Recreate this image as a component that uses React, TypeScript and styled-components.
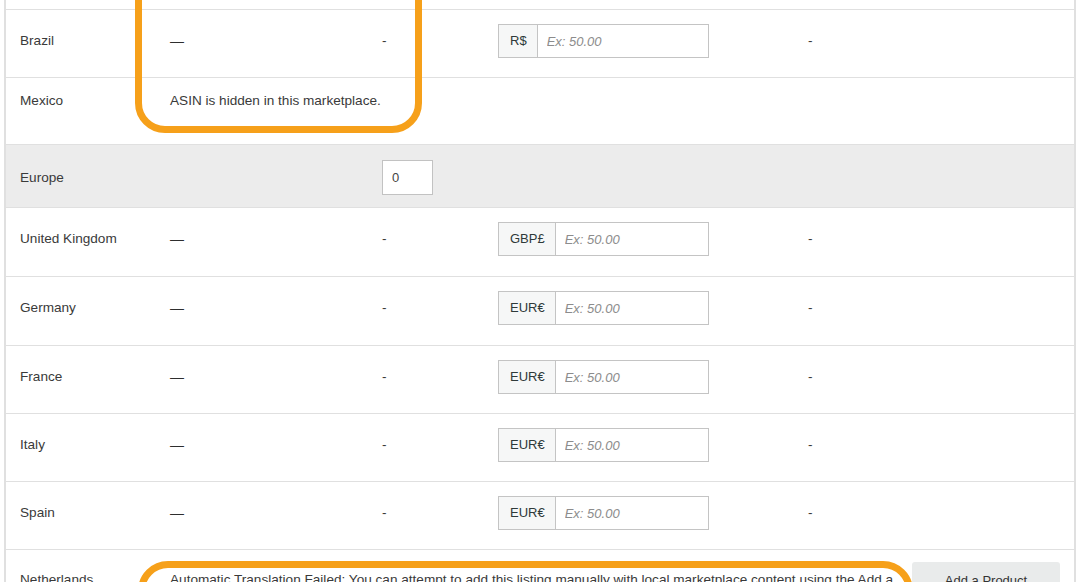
import React from 'react';
import styled, { createGlobalStyle } from 'styled-components';

const GlobalStyle = createGlobalStyle`
  html, body { margin: 0; padding: 0; background: #fff; overflow: hidden; }
  body { font-family: "Liberation Sans", Arial, sans-serif; color: #333; }
  * { box-sizing: border-box; }
`;

const Page = styled.div`
  position: relative;
  width: 1080px;
  height: 582px;
  overflow: hidden;
`;

const Table = styled.div`
  margin-left: 4px;
  width: 1072px;
  border-left: 2px solid #e0e0e0;
  border-right: 2px solid #e0e0e0;
`;

const Sliver = styled.div`
  height: 10px;
  border-bottom: 1px solid #e0e0e0;
`;

const Row = styled.div<{ $h: number; $shade?: boolean; $pt?: number }>`
  display: grid;
  grid-template-columns: 150px 212px 116px 310px 104px 1fr;
  align-items: start;
  height: ${(p) => p.$h}px;
  padding-top: ${(p) => p.$pt ?? 14}px;
  border-bottom: 1px solid #e0e0e0;
  background: ${(p) => (p.$shade ? '#ececec' : '#fff')};
  font-size: 13.6px;
`;

const Cell = styled.div<{ $lh?: number; $span?: number; $pt?: number }>`
  padding-left: 14px;
  padding-top: ${(p) => p.$pt ?? 0}px;
  line-height: ${(p) => p.$lh ?? 34}px;
  grid-column: ${(p) => (p.$span ? `span ${p.$span}` : 'auto')};
  color: #3a3a3a;
`;

const Dash = styled.span`
  color: #2e2e2e;
  font-size: 14px;
`;

const PriceGroup = styled.div`
  display: flex;
  width: 211px;
  height: 34px;
  border: 1px solid #c4c4c4;
  background: #fff;
`;

const Prefix = styled.span`
  display: flex;
  align-items: center;
  padding: 0 10px 0 11px;
  background: #f6f7f7;
  border-right: 1px solid #c4c4c4;
  font-size: 13px;
  color: #2f3a3a;
`;

const PriceInput = styled.input`
  flex: 1;
  min-width: 0;
  border: none;
  outline: none;
  background: transparent;
  padding: 0 9px;
  font-family: "Liberation Sans", Arial, sans-serif;
  font-size: 13px;
  font-style: italic;
  &::placeholder {
    color: #8c8c8c;
    font-style: italic;
  }
`;

const QtyInput = styled.input`
  display: block;
  width: 51px;
  height: 35px;
  border: 1px solid #c2c2c2;
  background: #fff;
  padding: 0 9px;
  font-family: "Liberation Sans", Arial, sans-serif;
  font-size: 13px;
  color: #444;
  outline: none;
`;

const ActionButton = styled.button`
  display: flex;
  align-items: center;
  justify-content: center;
  width: 148px;
  height: 36px;
  border: none;
  border-radius: 3px;
  background: #e9ebeb;
  font-family: "Liberation Sans", Arial, sans-serif;
  font-size: 13px;
  color: #333;
`;

const Highlight = styled.div<{ $left: number; $top: number; $w: number; $h: number }>`
  position: absolute;
  left: ${(p) => p.$left}px;
  top: ${(p) => p.$top}px;
  width: ${(p) => p.$w}px;
  height: ${(p) => p.$h}px;
  border: 7px solid #f6a01a;
  border-radius: 30px;
  pointer-events: none;
`;

type Market = { name: string; cur: string; h: number };

const europe: Market[] = [
  { name: 'United Kingdom', cur: 'GBP£', h: 69 },
  { name: 'Germany', cur: 'EUR€', h: 69 },
  { name: 'France', cur: 'EUR€', h: 68 },
  { name: 'Italy', cur: 'EUR€', h: 68 },
  { name: 'Spain', cur: 'EUR€', h: 68 },
];

const PriceRow = ({ m }: { m: Market }) => (
  <Row $h={m.h}>
    <Cell>{m.name}</Cell>
    <Cell>
      <Dash>—</Dash>
    </Cell>
    <Cell>-</Cell>
    <Cell>
      <PriceGroup>
        <Prefix>{m.cur}</Prefix>
        <PriceInput placeholder="Ex: 50.00" readOnly />
      </PriceGroup>
    </Cell>
    <Cell>-</Cell>
    <Cell />
  </Row>
);

export default function App() {
  return (
    <Page>
      <GlobalStyle />
      <Table>
        <Sliver />
        <PriceRow m={{ name: 'Brazil', cur: 'R$', h: 68 }} />
        <Row $h={67}>
          <Cell $lh={17}>Mexico</Cell>
          <Cell $lh={17} $span={2}>
            ASIN is hidden in this marketplace.
          </Cell>
        </Row>
        <Row $h={63} $shade $pt={15}>
          <Cell $lh={35}>Europe</Cell>
          <Cell />
          <Cell>
            <QtyInput defaultValue="0" />
          </Cell>
        </Row>
        {europe.map((m) => (
          <PriceRow key={m.name} m={m} />
        ))}
        <Row $h={120} $pt={0}>
          <Cell $lh={17} $pt={21}>
            Netherlands
          </Cell>
          <Cell $lh={17} $pt={21} $span={4}>
            Automatic Translation Failed: You can attempt to add this listing manually with local
            marketplace content using the Add a Product page.
          </Cell>
          <Cell $pt={12}>
            <ActionButton>Add a Product</ActionButton>
          </Cell>
        </Row>
      </Table>
      <Highlight $left={135} $top={-40} $w={287} $h={173} />
      <Highlight $left={138} $top={561} $w={775} $h={90} />
    </Page>
  );
}
